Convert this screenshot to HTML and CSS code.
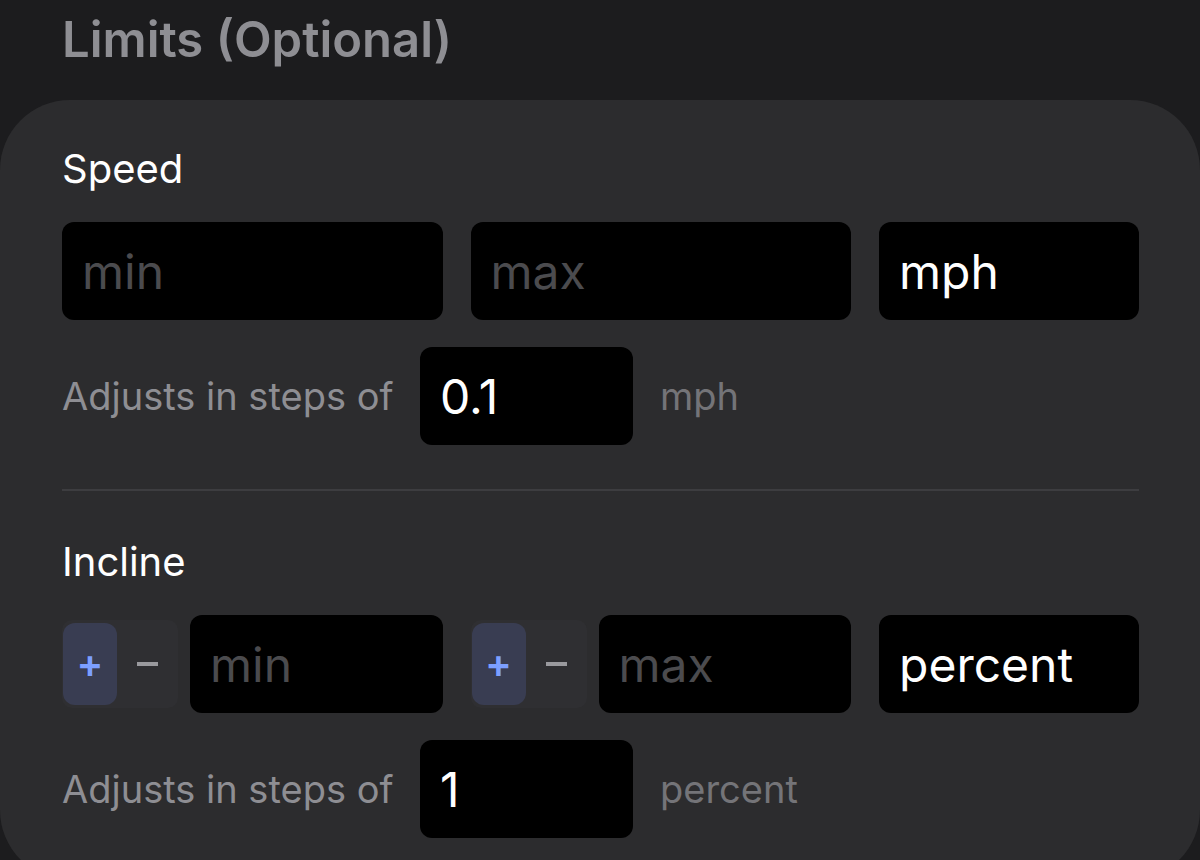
FILE: index.html
```html
<!DOCTYPE html>
<html lang="en">
<head>
<meta charset="utf-8">
<title>Limits</title>
<link rel="stylesheet" href="styles.css">
</head>
<body>
<main class="screen">
  <h2 class="section-title">Limits (Optional)</h2>
  <section class="card">
    <div class="group">
      <h3 class="group-label">Speed</h3>
      <div class="field-row">
        <div class="cell"><div class="field placeholder">min</div></div>
        <div class="cell"><div class="field placeholder">max</div></div>
        <div class="field unit">mph</div>
      </div>
      <div class="step-row">
        <span class="step-label">Adjusts in steps of</span>
        <div class="field step">0.1</div>
        <span class="step-unit">mph</span>
      </div>
    </div>
    <hr class="divider">
    <div class="group incline">
      <h3 class="group-label">Incline</h3>
      <div class="field-row">
        <div class="cell">
          <div class="stepper">
            <span class="stepper-btn plus">+</span>
            <span class="stepper-btn minus"></span>
          </div>
          <div class="field placeholder">min</div>
        </div>
        <div class="cell">
          <div class="stepper">
            <span class="stepper-btn plus">+</span>
            <span class="stepper-btn minus"></span>
          </div>
          <div class="field placeholder">max</div>
        </div>
        <div class="field unit">percent</div>
      </div>
      <div class="step-row">
        <span class="step-label">Adjusts in steps of</span>
        <div class="field step">1</div>
        <span class="step-unit">percent</span>
      </div>
    </div>
  </section>
</main>
</body>
</html>
```
FILE: styles.css
```css
html, body {
  margin: 0;
  padding: 0;
  background: #1c1c1e;
}

body {
  width: 1200px;
  height: 860px;
  overflow: hidden;
  font-family: Inter, "Noto Sans", "Liberation Sans", sans-serif;
  color: #fff;
}

.screen {
  display: flex;
  flex-direction: column;
}

.section-title {
  margin: 0;
  padding: 10px 0 0 62px;
  height: 100px;
  box-sizing: border-box;
  font-size: 49px;
  font-weight: 600;
  line-height: 60px;
  color: #8e8e93;
}

.card {
  background: #2c2c2e;
  border-radius: 70px;
  padding: 45px 61px 60px 62px;
  height: 780px;
  box-sizing: border-box;
}

.group-label {
  margin: 0;
  font-size: 40px;
  font-weight: 400;
  line-height: 48px;
  color: #fff;
}

.field-row {
  display: grid;
  grid-template-columns: 1fr 1fr 260px;
  gap: 28px;
  margin-top: 29px;
}

.cell {
  display: flex;
  align-items: center;
  gap: 12px;
}

.cell .field {
  flex: 1;
}

.field {
  height: 98px;
  background: #000;
  border-radius: 12px;
  box-sizing: border-box;
  padding-left: 20px;
  display: flex;
  align-items: center;
  font-size: 48px;
  color: #fff;
}

.field.placeholder {
  color: #4b4b4e;
}

.step-row {
  display: flex;
  align-items: center;
  margin-top: 27px;
}

.step-label {
  font-size: 38px;
  color: #8e8e93;
  width: 358px;
}

.field.step {
  width: 213px;
}

.step-unit {
  margin-left: 27px;
  font-size: 38px;
  color: #747478;
}

.divider {
  margin: 44px 0 0;
  border: 0;
  height: 2px;
  background: #3d3d40;
}

.incline {
  margin-top: 47px;
}

.stepper {
  display: flex;
  align-items: center;
  height: 88px;
  width: 116px;
  padding: 0 0 0 1px;
  box-sizing: border-box;
  background: #2f2f32;
  border-radius: 10px;
}

.stepper-btn {
  display: flex;
  align-items: center;
  justify-content: center;
  height: 82px;
  width: 54px;
  border-radius: 12px;
}

.stepper-btn.plus {
  background: #393d52;
  color: #7c9fff;
  font-size: 40px;
  font-weight: 600;
  line-height: 1;
}

.stepper-btn.minus {
  flex: 1;
}

.stepper-btn.minus::before {
  content: "";
  width: 21px;
  height: 4px;
  background: #9a9a9e;
}
```
